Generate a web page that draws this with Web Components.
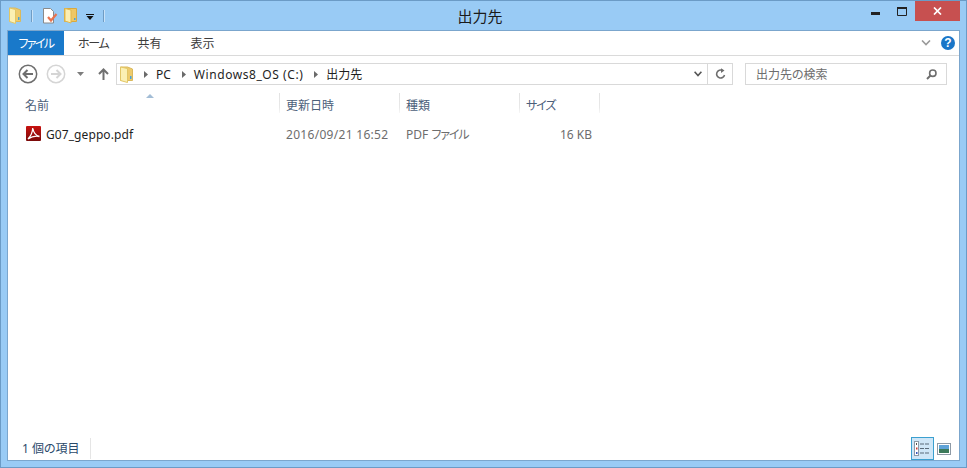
<!DOCTYPE html>
<html lang="ja">
<head>
<meta charset="utf-8">
<title>出力先</title>
<style>
  html, body { margin: 0; height: 100%; overflow: hidden; background: #99cbf5; }
</style>
</head>
<body>
<ex-window>
  <ex-titlebar slot="top" label="出力先"></ex-titlebar>
  <ex-ribbon></ex-ribbon>
  <ex-navbar path="PC,Windows8_OS (C:),出力先" search="出力先の検索"></ex-navbar>
  <ex-filelist></ex-filelist>
  <ex-statusbar slot="bottom" count="1 個の項目"></ex-statusbar>
</ex-window>

<script>
const FONT = '"Noto Sans", "Noto Sans CJK JP", sans-serif'

class ExWindow extends HTMLElement {
  constructor() {
    super()
    this.attachShadow({ mode: 'open' }).innerHTML = `
      <style>
        :host {
          display: flex;
          flex-direction: column;
          box-sizing: border-box;
          height: 468px;
          width: 967px;
          background: #99cbf5;
          border: 1px solid #6b9bc6;
          font: 12px ${FONT};
          font-feature-settings: "palt";
          color: #1e1e1e;
        }
        .client {
          flex: 1;
          display: flex;
          flex-direction: column;
          margin: 0 6px 6px;
          background: #fff;
          border: 1px solid #7ba6cd;
          min-height: 0;
        }
      </style>
      <slot name="top"></slot>
      <div class="client"><slot></slot><slot name="bottom"></slot></div>
    `
  }
}

class ExTitlebar extends HTMLElement {
  constructor() {
    super()
    this.attachShadow({ mode: 'open' }).innerHTML = `
      <style>
        :host {
          display: grid;
          grid-template-columns: 1fr auto 1fr;
          align-items: start;
          height: 29px;
        }
        .qat { display: flex; align-items: center; height: 29px; padding: 0 0 0 8px; }
        .sep { width: 1px; height: 12px; background: #6f9cc4; box-shadow: 1px 0 0 #c8e2f8; }
        .title { font-size: 15px; line-height: 30px; margin-right: 7px; color: #1b1b1b; }
        .ctrls { display: flex; justify-content: flex-end; padding-right: 6px; }
        .ctrl { display: flex; align-items: center; justify-content: center; height: 20px; }
        .min { width: 26px; }
        .min svg { margin-top: 5px; }
        .max { width: 27px; }
        .close { width: 45px; background: #c75050; }
      </style>
      <div class="qat">
        <svg style="margin-right:10px" width="12" height="17" viewBox="0 0 12 17"><path d="M.5 1h6l5 2v11.500h-11z" fill="#eecb6d" stroke="#dab95c"/><path d="M.5 1l6 1.500v14l-6-2z" fill="#fbf0b4" stroke="#e2c666"/><rect x="9" y="10" width="1.500" height="3" fill="#4aa3d8"/></svg>
        <span class="sep" style="margin-right:10px"></span>
        <svg style="margin-right:6px" width="16" height="16" viewBox="0 0 16 16"><path d="M1.500.5h7l3 3v11.500h-10z" fill="#fff" stroke="#8a8a8a"/><path d="M6 9l3 3.500 5.500-6.500" fill="none" stroke="#e8734f" stroke-width="2.200"/></svg>
        <svg style="margin-right:8px" width="14" height="17" viewBox="0 0 14 17"><path d="M.5 1.500h12v13h-12z" fill="#eec766" stroke="#d9a93e"/><path d="M1 1.500l6 1.500v13l-6-2z" fill="#fbeeb2" stroke="#e0b84e"/><rect x="10" y="11" width="1.500" height="2" fill="#4aa3d8"/></svg>
        <svg style="margin-right:9px;margin-top:3px" width="8" height="6" viewBox="0 0 8 6"><path d="M0 .5h8" stroke="#111"/><path d="M.5 2h7l-3.500 4z" fill="#111"/></svg>
        <span class="sep"></span>
      </div>
      <div class="title">${this.getAttribute('label')}</div>
      <div class="ctrls">
        <div class="ctrl min"><svg width="9" height="3"><rect width="9" height="3" fill="#222"/></svg></div>
        <div class="ctrl max"><svg width="10" height="9" viewBox="0 0 10 9"><path d="M.5 1v7.500h9V1z" fill="none" stroke="#222"/><rect width="10" height="2" fill="#222"/></svg></div>
        <div class="ctrl close"><svg width="9" height="8" viewBox="0 0 9 8"><path d="M1 .5l7 7M8 .5l-7 7" stroke="#fff" stroke-width="1.700"/></svg></div>
      </div>
    `
  }
}

class ExRibbon extends HTMLElement {
  constructor() {
    super()
    this.attachShadow({ mode: 'open' }).innerHTML = `
      <style>
        :host {
          display: flex;
          align-items: center;
          height: 24px;
          border-bottom: 1px solid #dadada;
          padding-right: 4px;
        }
        .file { width: 56px; height: 100%; background: #1979ca; color: #fff; display: flex; align-items: center; justify-content: center; letter-spacing: -1.600px; }
        .tab { color: #3c3c3c; }
        .kana { letter-spacing: -1.300px; }
        .right { margin-left: auto; display: flex; align-items: center; gap: 10px; }
        .help { width: 14px; height: 14px; border-radius: 50%; background: #1a76c8; color: #fff; font: bold 12px/14px "Liberation Sans", sans-serif; text-align: center; }
      </style>
      <div class="file">ファイル</div>
      <div class="tab kana" style="margin-left:14px">ホーム</div>
      <div class="tab" style="margin-left:29px">共有</div>
      <div class="tab" style="margin-left:29px">表示</div>
      <div class="right">
        <svg width="10" height="6" viewBox="0 0 10 6"><path d="M1 .5l4 4 4-4" fill="none" stroke="#9a9a9a" stroke-width="1.600"/></svg>
        <div class="help">?</div>
      </div>
    `
  }
}

class ExNavbar extends HTMLElement {
  constructor() {
    super()
    const crumbs = this.getAttribute('path').split(',')
      .map(p => `<svg class="chev" width="4" height="7"><path d="M0 0l4 3.500-4 3.500z" fill="#6a6a6a"/></svg><span class="${p.length > 10 ? 'wide' : ''}">${p}</span>`)
      .join('')
    this.attachShadow({ mode: 'open' }).innerHTML = `
      <style>
        :host {
          display: flex;
          align-items: center;
          height: 36px;
          padding: 0 11px 0 10px;
        }
        .box {
          box-sizing: border-box;
          height: 22px;
          border: 1px solid #d9d9d9;
          display: flex;
          align-items: center;
        }
        .addr { width: 617px; margin-left: 7px; padding-left: 3px; }
        .addr svg.folder { flex: none; margin-right: 10px; }
        .crumbs { display: flex; align-items: center; color: #1e1e1e; }
        .chev { margin-right: 8px; }
        .crumbs span { margin-right: 11px; }
        .crumbs .wide { letter-spacing: .56px; }
        .combo { margin-left: auto; width: 18px; display: flex; justify-content: center; }
        .refresh { width: 24px; height: 100%; border-left: 1px solid #d9d9d9; display: flex; align-items: center; justify-content: center; }
        .search { width: 202px; margin-left: 12px; padding: 0 9px 0 10px; color: #6d6d6d; justify-content: space-between; }
      </style>
      <svg width="20" height="20" viewBox="0 0 20 20"><circle cx="10" cy="10" r="8.700" fill="#fff" stroke="#6e6e6e" stroke-width="1.500"/><path d="M15 10H6M9.500 6l-4 4 4 4" fill="none" stroke="#6e6e6e" stroke-width="2"/></svg>
      <svg style="margin-left:8px" width="20" height="20" viewBox="0 0 20 20"><circle cx="10" cy="10" r="8.700" fill="#fff" stroke="#d5d5d5" stroke-width="1.500"/><path d="M5 10h9M10.500 6l4 4-4 4" fill="none" stroke="#d5d5d5" stroke-width="2"/></svg>
      <svg style="margin-left:11px" width="7" height="4"><path d="M0 0h7l-3.500 4z" fill="#7d7d7d"/></svg>
      <svg style="margin-left:14px" width="11" height="12" viewBox="0 0 11 12"><path d="M5.500 12V1.500M1 6l4.500-4.500L10 6" fill="none" stroke="#707070" stroke-width="2"/></svg>
      <div class="box addr">
        <svg class="folder" width="14" height="17" viewBox="0 0 14 17"><path d="M.5 1h7l5 2v11.500h-12z" fill="#eecb6d" stroke="#dab95c"/><path d="M.5 1l7 1.500v14l-7-2z" fill="#fbf0b4" stroke="#e2c666"/><rect x="10" y="10" width="1.500" height="3" fill="#4aa3d8"/></svg>
        <div class="crumbs">${crumbs}</div>
        <div class="combo"><svg width="8" height="6" viewBox="0 0 8 6"><path d="M.6.800L4 4.500 7.400.800" fill="none" stroke="#555" stroke-width="1.600"/></svg></div>
        <div class="refresh"><svg width="11" height="12" viewBox="0 0 11 12"><path d="M9.500 7a4 4 0 1 1-2-4.500" fill="none" stroke="#6e6e6e" stroke-width="1.600"/><path d="M6 .2l3.500 2.300L6 5z" fill="#6e6e6e"/></svg></div>
      </div>
      <div class="box search">
        <span>${this.getAttribute('search')}</span>
        <svg width="11" height="11" viewBox="0 0 11 11"><circle cx="6.800" cy="4.200" r="3.200" fill="none" stroke="#6e6e6e" stroke-width="1.600"/><path d="M4.500 6.500L1 10" stroke="#6e6e6e" stroke-width="2"/></svg>
      </div>
    `
  }
}

class ExFilelist extends HTMLElement {
  constructor() {
    super()
    this.attachShadow({ mode: 'open' }).innerHTML = `
      <style>
        :host { display: block; flex: 1; min-height: 0; position: relative; }
        .grid { display: grid; grid-template-columns: 272px 120px 120px 80px; width: 592px; padding-top: 1px; }
        .head {
          height: 20px;
          display: flex;
          align-items: center;
          padding: 4px 0 0 6px;
          color: #4c607a;
          box-sizing: border-box;
          border-right: 1px solid;
          border-image: linear-gradient(#e2e2e2, #e8e8e8 70%, #fafafa) 1;
        }
        .head.name { padding-left: 17px; }
        .kana { letter-spacing: -1.100px; }
        .sort { position: absolute; left: 138px; top: 2px; }
        .cell { height: 22px; margin-top: 10px; display: flex; align-items: center; padding-left: 6px; color: #6d6d6d; }
        .cell.name { padding-left: 18px; color: #1e1e1e; gap: 5px; letter-spacing: .08px; }
        .cell.name svg { margin-top: -1px; }
        .cell.date { letter-spacing: .3px; }
        .cell.size { justify-content: flex-end; padding-right: 8px; }
      </style>
      <svg class="sort" width="8" height="4"><path d="M0 4l4-4 4 4z" fill="#a3bdd6"/></svg>
      <div class="grid">
        <div class="head name">名前</div>
        <div class="head">更新日時</div>
        <div class="head">種類</div>
        <div class="head"><span class="kana">サイズ</span></div>
        <div class="cell name">
          <svg width="15" height="15" viewBox="0 0 15 15">
            <defs><linearGradient id="pdf" x1="0" y1="0" x2="0" y2="1"><stop offset="0" stop-color="#c8120f"/><stop offset="1" stop-color="#7a0a0a"/></linearGradient></defs>
            <rect width="15" height="15" rx="1" fill="url(#pdf)"/>
            <path d="M2 13C4.500 10.500 6.500 6 6.800 2c.5 4 3 7.500 6.700 8.500-4-.8-8.200.3-11.500 2.500z" fill="none" stroke="#fff" stroke-width="1.300"/>
          </svg>
          <span>G07_geppo.pdf</span>
        </div>
        <div class="cell date">2016/09/21 16:52</div>
        <div class="cell"><span>PDF <span class="kana">ファイル</span></span></div>
        <div class="cell size">16 KB</div>
      </div>
    `
  }
}

class ExStatusbar extends HTMLElement {
  constructor() {
    super()
    this.attachShadow({ mode: 'open' }).innerHTML = `
      <style>
        :host { display: flex; align-items: center; height: 23px; padding: 0 8px 0 14px; color: #2b4a6b; }
        .count { padding-right: 10px; border-right: 1px solid #e5e5e5; line-height: 21px; }
        .views { margin-left: auto; display: flex; align-items: center; gap: 3px; }
        .on { box-sizing: border-box; width: 23px; height: 23px; background: #cfe6f7; border: 1px solid #3ba0d0; display: flex; align-items: center; justify-content: center; }
      </style>
      <span class="count">${this.getAttribute('count')}</span>
      <div class="views">
        <div class="on"><svg width="17" height="15" viewBox="0 0 17 15"><rect x=".5" y=".5" width="4" height="14" fill="#fff" stroke="#8e9aa6"/><rect x="2" y="2" width="1" height="2" fill="#555"/><rect x="2" y="6.500" width="1.500" height="2" fill="#d13a30"/><rect x="2" y="11" width="1.500" height="2" fill="#3355bb"/><path d="M6 3h10M6 7.500h10M6 12h10" stroke="#5a6b7a" stroke-width="1.200" stroke-dasharray="4 1"/></svg></div>
        <svg width="14" height="12" viewBox="0 0 14 12"><rect x=".5" y=".5" width="13" height="11" fill="#fff" stroke="#8e9aa6"/><rect x="2" y="2" width="10" height="4" fill="#5fa3d8"/><rect x="2" y="6" width="10" height="4" fill="#3d7a5a"/></svg>
      </div>
    `
  }
}

customElements.define('ex-window', ExWindow)
customElements.define('ex-titlebar', ExTitlebar)
customElements.define('ex-ribbon', ExRibbon)
customElements.define('ex-navbar', ExNavbar)
customElements.define('ex-filelist', ExFilelist)
customElements.define('ex-statusbar', ExStatusbar)
</script>
</body>
</html>
